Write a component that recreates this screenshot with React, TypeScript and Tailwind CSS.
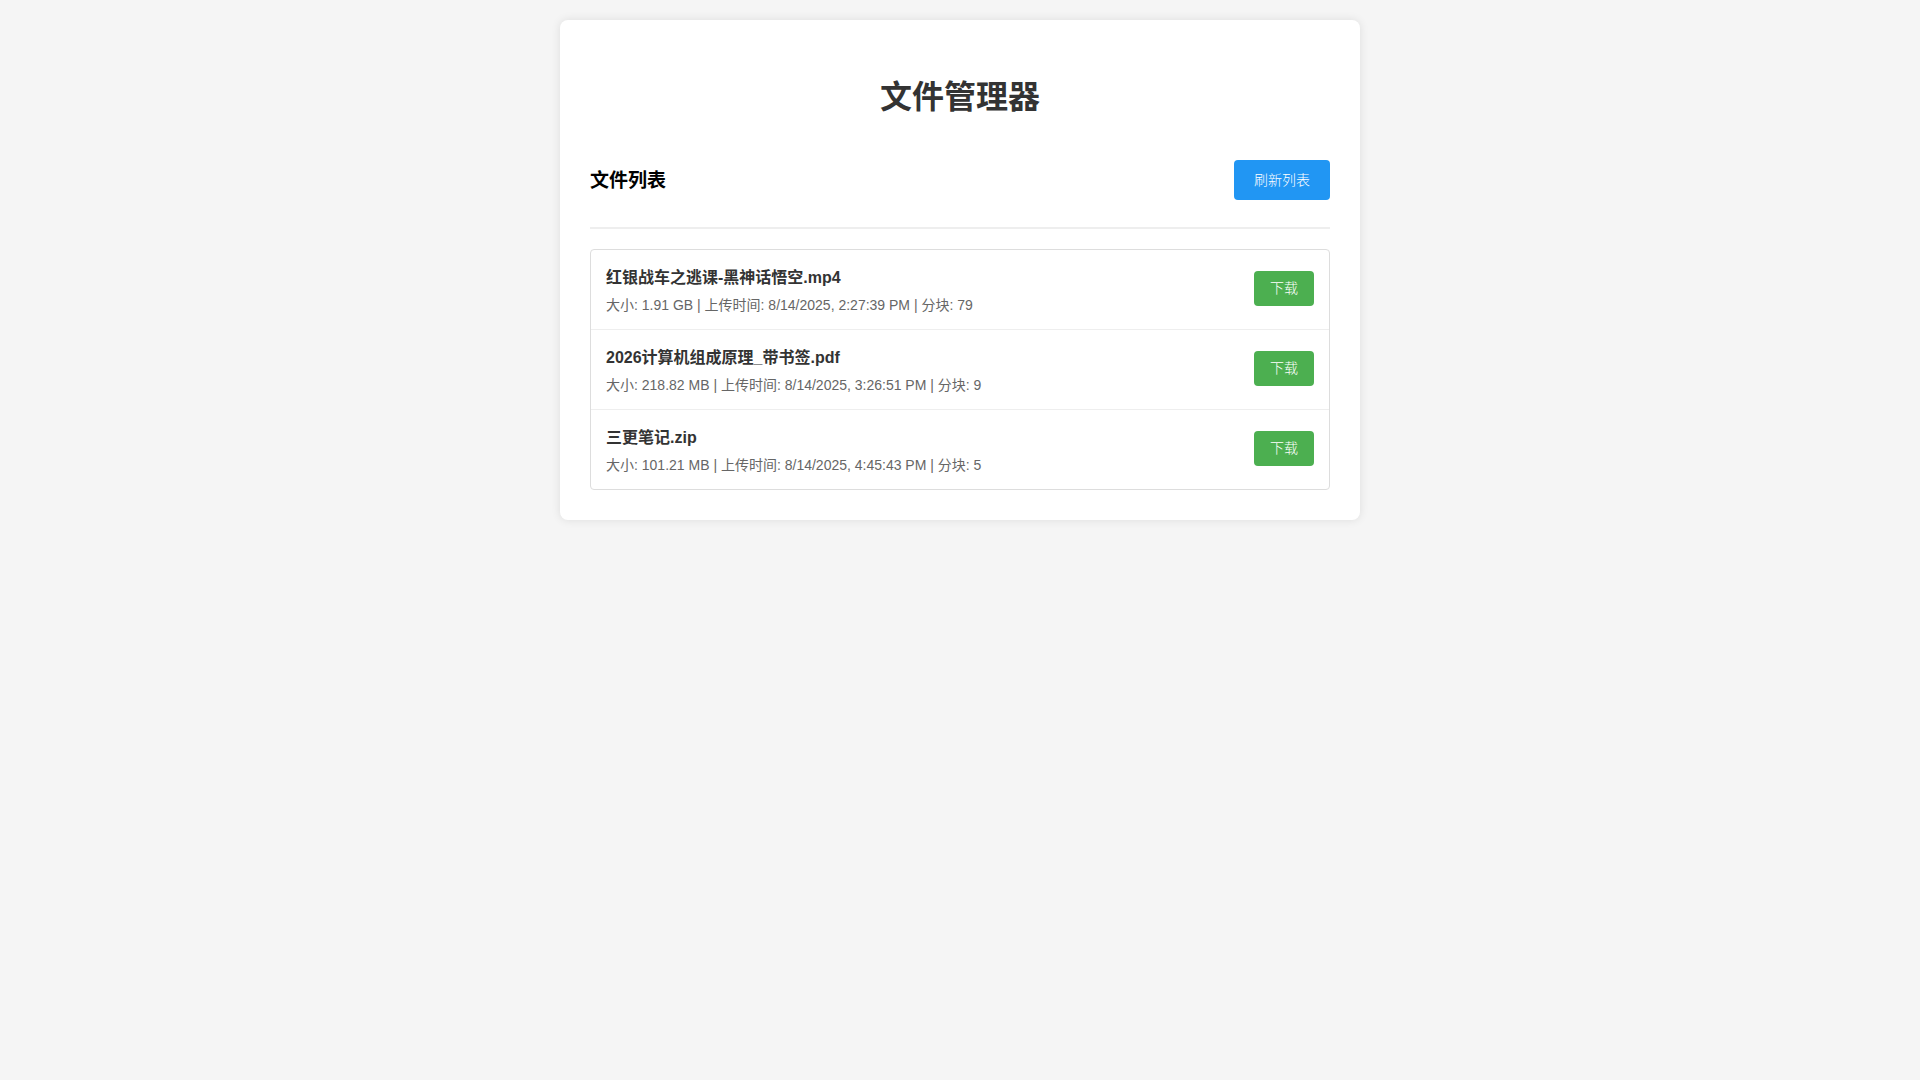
import React from 'react';

type FileItem = {
  name: string;
  size: string;
  uploadedAt: string;
  chunks: number;
};

const files: FileItem[] = [
  {
    name: '红银战车之逃课-黑神话悟空.mp4',
    size: '1.91 GB',
    uploadedAt: '8/14/2025, 2:27:39 PM',
    chunks: 79,
  },
  {
    name: '2026计算机组成原理_带书签.pdf',
    size: '218.82 MB',
    uploadedAt: '8/14/2025, 3:26:51 PM',
    chunks: 9,
  },
  {
    name: '三更笔记.zip',
    size: '101.21 MB',
    uploadedAt: '8/14/2025, 4:45:43 PM',
    chunks: 5,
  },
];

function FileRow({ file, last }: { file: FileItem; last: boolean }) {
  return (
    <li
      className={`flex items-center justify-between px-[15px] pb-[14px] pt-[16px] ${
        last ? '' : 'border-b border-[#eee]'
      }`}
    >
      <div>
        <div className="text-[16px] font-bold leading-[24px] text-[#333]">{file.name}</div>
        <div className="mt-[5px] text-[14px] leading-[20px] text-[#666]">
          大小: {file.size} | 上传时间: {file.uploadedAt} | 分块: {file.chunks}
        </div>
      </div>
      <button
        type="button"
        className="mb-[4px] rounded-[4px] bg-[#4CAF50] px-4 py-[8px] text-[14px] font-light leading-[19px] text-white"
      >
        下载
      </button>
    </li>
  );
}

export default function App() {
  return (
    <div
      className="min-h-screen bg-[#f5f5f5] pt-5"
      style={{ fontFamily: '"Liberation Sans", Arial, "Noto Sans CJK SC", sans-serif' }}
    >
      <main className="mx-auto w-[800px] rounded-[8px] bg-white p-[30px] shadow-[0_0_10px_rgba(0,0,0,0.1)]">
        <h1 className="mb-[40px] mt-[24px] text-center text-[32px] font-bold leading-[46px] text-[#333]">
          文件管理器
        </h1>

        <section className="flex items-center justify-between border-b-2 border-[#eee] pb-[27px]">
          <h2 className="pt-[2px] text-[19px] font-bold leading-[28px] text-black">文件列表</h2>
          <button
            type="button"
            className="h-10 rounded-[4px] bg-[#2196F3] px-5 text-[14px] font-light text-white"
          >
            刷新列表
          </button>
        </section>

        <ul className="mt-5 rounded-[4px] border border-[#ddd]">
          {files.map((file, i) => (
            <FileRow key={file.name} file={file} last={i === files.length - 1} />
          ))}
        </ul>
      </main>
    </div>
  );
}
